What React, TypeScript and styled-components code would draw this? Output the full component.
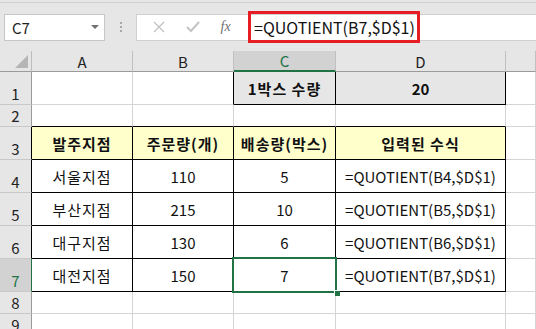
import styled, { createGlobalStyle } from "styled-components";

const GlobalStyle = createGlobalStyle`
  body {
    margin: 0;
    overflow: hidden;
    background: #ffffff;
    font-family: "Noto Sans CJK KR", "Noto Sans", sans-serif;
    color: #000;
  }
`;

const GRID = "#d4d4d4";
const HEAD_BG = "#e6e6e6";
const HEAD_SEL = "#d2d2d2";
const GREEN = "#217346";
const YELLOW = "#ffffcc";
const GRAY_FILL = "#e7e6e6";

const Window = styled.div`
  width: 536px;
  height: 329px;
  overflow: hidden;
  background: ${HEAD_BG};
`;

const Toolbar = styled.div`
  height: 49px;
  box-sizing: border-box;
  border-top: 1px solid #d0d0d0;
  margin-top: 2px;
  display: flex;
  align-items: center;
  padding: 0 0 0 4px;
`;

const NameBox = styled.div`
  width: 101px;
  height: 27px;
  box-sizing: border-box;
  background: #fff;
  border: 1px solid #c6c6c6;
  display: flex;
  align-items: center;
  justify-content: space-between;
  padding: 0 5px 0 7px;
  font-size: 15px;
  color: #222;
`;

const Caret = styled.span`
  width: 0;
  height: 0;
  border-left: 4px solid transparent;
  border-right: 4px solid transparent;
  border-top: 4px solid #707070;
`;

const Dots = styled.div`
  width: 31px;
  display: flex;
  flex-direction: column;
  align-items: center;
  gap: 2px;
  span {
    width: 2px;
    height: 2px;
    background: #a8a8a8;
  }
`;

const FuncBox = styled.div`
  width: 109px;
  height: 27px;
  box-sizing: border-box;
  background: #fff;
  border: 1px solid #d0d0d0;
  border-right: none;
  display: flex;
  align-items: center;
  justify-content: space-around;
  padding: 0 4px 0 6px;
`;

const FxLabel = styled.span`
  font-family: "Liberation Serif", serif;
  font-style: italic;
  font-size: 14px;
  color: #6f6f6f;
`;

const FormulaBar = styled.div`
  flex: 1;
  height: 27px;
  box-sizing: border-box;
  background: #fff;
  border-top: 1px solid #d0d0d0;
  border-bottom: 1px solid #d0d0d0;
  display: flex;
  align-items: center;
  padding-left: 3px;
`;

/* red callout around the formula text */
const Highlight = styled.div`
  width: 172px;
  height: 32px;
  box-sizing: border-box;
  border: 3px solid #e81c24;
  display: flex;
  align-items: center;
  padding-left: 3px;
  font-size: 16px;
  color: #111;
  white-space: nowrap;
`;

const Sheet = styled.div`
  display: grid;
  grid-template-columns: 32px 101px 101px 102px 170px 1fr;
  grid-template-rows: 21px 33px 22px 33px 33px 33px 33px 33px 22px 22px;
  background: #fff;
`;

const Corner = styled.div`
  background: ${HEAD_BG};
  border-right: 1px solid #bdbdbd;
  border-bottom: 1px solid #9b9b9b;
  display: flex;
  align-items: flex-end;
  justify-content: flex-end;
  padding: 0 3px 3px 0;
  &::after {
    content: "";
    width: 0;
    height: 0;
    border-left: 13px solid transparent;
    border-bottom: 13px solid #b5b5b5;
  }
`;

const ColHead = styled.div<{ $selected?: boolean }>`
  background: ${(p) => (p.$selected ? HEAD_SEL : HEAD_BG)};
  border-right: 1px solid #c0c0c0;
  border-bottom: ${(p) =>
    p.$selected ? `2px solid ${GREEN}` : "1px solid #9b9b9b"};
  display: flex;
  align-items: center;
  justify-content: center;
  font-size: 15px;
  color: ${(p) => (p.$selected ? GREEN : "#222")};
`;

const RowHead = styled.div<{ $selected?: boolean; $edge?: boolean }>`
  background: ${(p) => (p.$selected ? HEAD_SEL : HEAD_BG)};
  border-right: 1px solid
    ${(p) => (p.$selected ? GREEN : p.$edge ? "#000" : "#9b9b9b")};
  border-bottom: 1px solid #c8c8c8;
  display: flex;
  align-items: flex-end;
  justify-content: center;
  font-size: 15px;
  line-height: 20px;
  color: ${(p) => (p.$selected ? GREEN : "#222")};
`;

const Cell = styled.div<{
  $fill?: string;
  $bold?: boolean;
  $right?: boolean;
  $bottom?: boolean;
  $active?: boolean;
  $hangul?: boolean;
}>`
  position: relative;
  z-index: ${(p) => (p.$active ? 2 : "auto")};
  box-sizing: border-box;
  background: ${(p) => p.$fill || "#fff"};
  border-right: 1px solid ${(p) => (p.$right ? "#000" : GRID)};
  border-bottom: 1px solid ${(p) => (p.$bottom ? "#000" : GRID)};
  display: flex;
  align-items: center;
  justify-content: center;
  font-size: 15px;
  font-weight: ${(p) => (p.$bold ? 700 : 400)};
  letter-spacing: ${(p) => (p.$hangul ? "1px" : "0")};
  color: #111;
  white-space: nowrap;

  ${(p) =>
    p.$active &&
    `
    &::before {
      content: "";
      position: absolute;
      left: -2px;
      top: -2px;
      right: -2px;
      bottom: -2px;
      border: 2px solid ${GREEN};
      pointer-events: none;
    }
    &::after {
      content: "";
      position: absolute;
      right: -5px;
      bottom: -5px;
      width: 5px;
      height: 5px;
      background: ${GREEN};
      border: 1px solid #fff;
      border-right: none;
      border-bottom: none;
    }
  `}
`;

const branches = [
  { name: "서울지점", qty: 110, boxes: 5, formula: "=QUOTIENT(B4,$D$1)" },
  { name: "부산지점", qty: 215, boxes: 10, formula: "=QUOTIENT(B5,$D$1)" },
  { name: "대구지점", qty: 130, boxes: 6, formula: "=QUOTIENT(B6,$D$1)" },
  { name: "대전지점", qty: 150, boxes: 7, formula: "=QUOTIENT(B7,$D$1)" },
];

const headings = ["발주지점", "주문량(개)", "배송량(박스)", "입력된 수식"];

function CrossIcon() {
  return (
    <svg width="12" height="12" viewBox="0 0 12 12">
      <path d="M1 1L11 11M11 1L1 11" stroke="#c4c4c4" strokeWidth="1.4" />
    </svg>
  );
}

function CheckIcon() {
  return (
    <svg width="14" height="12" viewBox="0 0 14 12">
      <path d="M1 6L5 10L13 1" stroke="#c4c4c4" strokeWidth="2" fill="none" />
    </svg>
  );
}

export default function App() {
  return (
    <Window>
      <GlobalStyle />
      <Toolbar>
        <NameBox>
          C7
          <Caret />
        </NameBox>
        <Dots>
          <span />
          <span />
          <span />
        </Dots>
        <FuncBox>
          <CrossIcon />
          <CheckIcon />
          <FxLabel>fx</FxLabel>
        </FuncBox>
        <FormulaBar>
          <Highlight>=QUOTIENT(B7,$D$1)</Highlight>
        </FormulaBar>
      </Toolbar>

      <Sheet>
        <Corner />
        <ColHead>A</ColHead>
        <ColHead>B</ColHead>
        <ColHead $selected>C</ColHead>
        <ColHead>D</ColHead>
        <ColHead />

        <RowHead>1</RowHead>
        <Cell />
        <Cell $right />
        <Cell $right $bottom $bold $hangul $fill={GRAY_FILL}>
          1박스 수량
        </Cell>
        <Cell $right $bottom $bold $fill={GRAY_FILL}>
          20
        </Cell>
        <Cell />

        <RowHead>2</RowHead>
        <Cell $bottom />
        <Cell $bottom />
        <Cell $bottom />
        <Cell $bottom />
        <Cell />

        <RowHead $edge>3</RowHead>
        {headings.map((h) => (
          <Cell key={h} $right $bottom $bold $hangul $fill={YELLOW}>
            {h}
          </Cell>
        ))}
        <Cell />

        {branches.flatMap((b, i) => [
          <RowHead key={`h${i}`} $edge={i < 3} $selected={i === 3}>
            {i + 4}
          </RowHead>,
          <Cell key={`a${i}`} $right $bottom $hangul>
            {b.name}
          </Cell>,
          <Cell key={`b${i}`} $right $bottom>
            {b.qty}
          </Cell>,
          <Cell key={`c${i}`} $right $bottom $active={i === 3}>
            {b.boxes}
          </Cell>,
          <Cell key={`d${i}`} $right $bottom>
            {b.formula}
          </Cell>,
          <Cell key={`e${i}`} />,
        ])}

        <RowHead>8</RowHead>
        <Cell />
        <Cell />
        <Cell />
        <Cell />
        <Cell />

        <RowHead>9</RowHead>
        <Cell />
        <Cell />
        <Cell />
        <Cell />
        <Cell />
      </Sheet>
    </Window>
  );
}
